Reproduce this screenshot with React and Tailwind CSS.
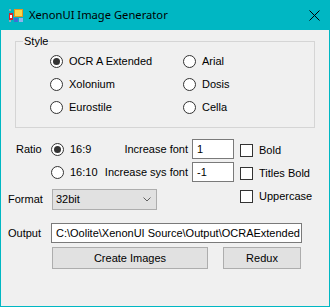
import React from "react";

const font = { fontFamily: '"Liberation Sans", Arial, sans-serif' };

const Radio = ({ checked, label, className = "" }) => (
  <div className={`flex items-center ${className}`}>
    <span className="w-[13px] h-[13px] rounded-full border border-[#333333] bg-white flex items-center justify-center shrink-0">
      {checked && <span className="w-[7px] h-[7px] rounded-full bg-[#333333]" />}
    </span>
    <span className="ml-[6px] whitespace-nowrap">{label}</span>
  </div>
);

const Check = ({ label }) => (
  <div className="flex items-center h-[23px]">
    <span className="w-[13px] h-[13px] border border-[#333333] bg-white shrink-0" />
    <span className="ml-[6px] whitespace-nowrap">{label}</span>
  </div>
);

const TextBox = ({ value, className = "" }) => (
  <div
    className={`h-[20px] bg-white border border-[#7a7a7a] flex items-center pl-[4px] overflow-hidden whitespace-nowrap ${className}`}
  >
    {value}
  </div>
);

const AppIcon = () => (
  <svg width="14" height="14" viewBox="0 0 14 14">
    <rect x="0" y="0" width="2" height="2" fill="#9aa4b0" />
    <rect x="0" y="11" width="2" height="2" fill="#9aa4b0" />
    <rect x="0" y="4" width="4" height="7" fill="#d8262b" />
    <rect x="1" y="6" width="2" height="3" fill="#ffffff" />
    <rect x="5" y="0" width="9" height="8" fill="#e8961c" />
    <rect x="6" y="1" width="7" height="6" fill="#f9d64a" />
    <rect x="5" y="9" width="4" height="4" fill="#3b6fd6" />
    <rect x="10" y="9" width="4" height="4" fill="#8fb2ee" />
  </svg>
);

export default function App() {
  return (
    <div
      className="w-[330px] h-[307px] bg-[#00b7c3] flex flex-col text-[11px] text-black"
      style={font}
    >
      {/* Title bar */}
      <div className="h-[30px] flex items-center shrink-0">
        <div className="ml-[9px] mt-[1px]">
          <AppIcon />
        </div>
        <span
          className="ml-[6px] text-[11.2px] text-black"
          style={{ fontFamily: '"Noto Sans", "Open Sans", sans-serif' }}
        >
          XenonUI Image Generator
        </span>
        <svg className="ml-auto mr-[10px]" width="11" height="11" viewBox="0 0 11 11">
          <path d="M0.5 0.5 L10.5 10.5 M10.5 0.5 L0.5 10.5" stroke="#000" strokeWidth="1" />
        </svg>
      </div>

      {/* Client */}
      <div className="flex-1 mx-[1px] mb-[1px] bg-[#f0f0f0] flex flex-col">
        {/* Style group */}
        <div className="relative ml-[14px] mt-[11px] w-[300px] h-[87px] border border-[#d5d5d5] shrink-0">
          <span className="absolute left-[7px] top-[-8px] px-[1px] bg-[#f0f0f0] leading-[14px]">
            Style
          </span>
          <div className="grid grid-cols-[133px_1fr] pl-[34px] pt-[13px] gap-y-[10px]">
            <Radio checked label="OCR A Extended" className="h-[13px]" />
            <Radio label="Arial" className="h-[13px]" />
            <Radio label="Xolonium" className="h-[13px]" />
            <Radio label="Dosis" className="h-[13px]" />
            <Radio label="Eurostile" className="h-[13px]" />
            <Radio label="Cella" className="h-[13px]" />
          </div>
        </div>

        {/* Options */}
        <div className="flex mt-[11px]">
          <div className="flex flex-col">
            <div className="flex items-center h-[20px] ml-[15px]">
              <span className="w-[35px]">Ratio</span>
              <Radio checked label="16:9" className="w-[56px]" />
              <div className="w-[81px] flex justify-end whitespace-nowrap">Increase font</div>
              <TextBox value="1" className="ml-[4px] w-[42px]" />
            </div>
            <div className="flex items-center h-[20px] ml-[15px] mt-[3px]">
              <span className="w-[35px]" />
              <Radio label="16:10" className="w-[56px]" />
              <div className="w-[81px] flex justify-end whitespace-nowrap">Increase sys font</div>
              <TextBox value="-1" className="ml-[4px] w-[42px]" />
            </div>
            <div className="flex items-center h-[21px] ml-[7px] mt-[7px]">
              <span className="w-[44px]">Format</span>
              <div className="w-[105px] h-[21px] bg-[#e1e1e1] border border-[#adadad] flex items-center pl-[3px] pr-[5px]">
                <span>32bit</span>
                <svg className="ml-auto" width="8" height="5" viewBox="0 0 8 5">
                  <path d="M0.5 0.5 L4 4 L7.5 0.5" stroke="#606060" fill="none" strokeWidth="1" />
                </svg>
              </div>
            </div>
          </div>
          <div className="flex flex-col ml-[6px]">
            <Check label="Bold" />
            <Check label="Titles Bold" />
            <Check label="Uppercase" />
          </div>
        </div>

        {/* Output */}
        <div className="flex items-center mt-[13px] ml-[7px]">
          <span className="w-[43px]">Output</span>
          <TextBox value="C:\Oolite\XenonUI Source\Output\OCRAExtended" className="w-[251px] pl-[3px]" />
        </div>

        {/* Buttons */}
        <div className="flex mt-[4px] ml-[51px]">
          <button className="w-[156px] h-[22px] bg-[#e1e1e1] border border-[#adadad] text-[11px]">
            Create Images
          </button>
          <button className="ml-[15px] w-[78px] h-[22px] bg-[#e1e1e1] border border-[#adadad] text-[11px]">
            Redux
          </button>
        </div>
      </div>
    </div>
  );
}
